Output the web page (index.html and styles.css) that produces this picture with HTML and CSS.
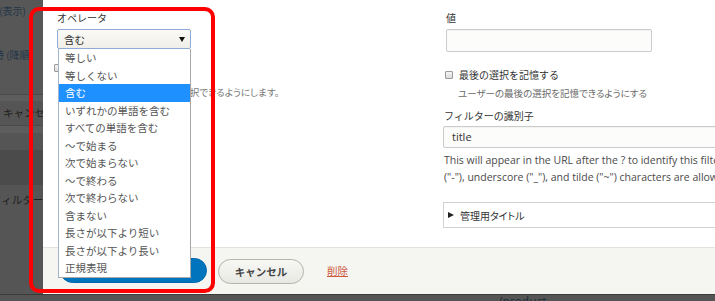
FILE: index.html
```html
<!DOCTYPE html>
<html lang="ja">
<head>
<meta charset="utf-8">
<title>フィルターの設定</title>
<link rel="stylesheet" href="styles.css">
</head>
<body>
<div class="screen">
  <div class="main">
    <aside class="backdrop">
      <div class="bd bd-1"><span class="bd-link">公開 (表示)</span></div>
      <div class="bd bd-2"><span class="bd-link">更新日時 (降順)</span></div>
      <div class="bd bd-line"></div>
      <div class="bd bd-3"></div>
      <div class="bd bd-4"><span class="bd-text">キャンセル</span></div>
      <div class="bd bd-line"></div>
      <div class="bd bd-5"></div>
      <div class="bd bd-6"></div>
      <div class="bd bd-7"></div>
      <div class="bd bd-8"><span class="bd-text bd-shift">フィルターで絞り込み</span></div>
    </aside>

    <section class="modal">
      <div class="modal-body">
        <div class="col col-left">
          <div class="label">オペレータ</div>
          <div class="select-wrap">
            <div class="select"><span>含む</span><span class="arrow"></span></div>
            <ul class="options">
              <li>等しい</li>
              <li>等しくない</li>
              <li class="selected">含む</li>
              <li>いずれかの単語を含む</li>
              <li>すべての単語を含む</li>
              <li>～で始まる</li>
              <li>次で始まらない</li>
              <li>～で終わる</li>
              <li>次で終わらない</li>
              <li>含まない</li>
              <li>長さが以下より短い</li>
              <li>長さが以下より長い</li>
              <li>正規表現</li>
            </ul>
          </div>
          <div class="check-row left-check"><span class="checkbox"></span><span class="check-label">オペレータを公開する</span></div>
          <div class="desc left-desc">ユーザーがこのフィルターの選択できるようにします。</div>
        </div>

        <div class="col col-right">
          <div class="label label-value">値</div>
          <div class="input input-value"></div>
          <div class="check-row right-check"><span class="checkbox"></span><span class="check-label">最後の選択を記憶する</span></div>
          <div class="desc right-desc">ユーザーの最後の選択を記憶できるようにする</div>
          <div class="label label-id">フィルターの識別子</div>
          <div class="input input-id">title</div>
          <div class="desc-en">This will appear in the URL after the ? to identify this filter. Cannot be blank. Only letters, digits and the dot ("."), hyphen<br>("-"), underscore ("_"), and tilde ("~") characters are allowed.</div>
          <div class="details"><span class="tri"></span><span>管理用タイトル</span></div>
        </div>
      </div>

      <div class="modal-footer">
        <button class="btn btn-primary">適用</button>
        <button class="btn btn-cancel">キャンセル</button>
        <a class="link-delete" href="#">削除</a>
      </div>
    </section>
  </div>
  <div class="bottom-band"><span>/product</span></div>
  <div class="annotation"></div>
</div>
</body>
</html>
```

FILE: styles.css
```css
* { box-sizing: border-box; }
html, body { margin: 0; padding: 0; }
body {
  width: 715px;
  height: 301px;
  overflow: hidden;
  background: #4d4d4d;
  font-family: "Noto Sans CJK JP", "Open Sans", sans-serif;
  color: #333;
}
.screen {
  position: relative;
  width: 715px;
  height: 301px;
  display: flex;
  flex-direction: column;
}
.main {
  display: flex;
  height: 294px;
  flex: none;
}

/* dimmed page behind the dialog */
.backdrop {
  width: 43px;
  flex: none;
  display: flex;
  flex-direction: column;
  background: #555;
  overflow: hidden;
  font-size: 10px;
  line-height: 14px;
}
.bd { display: flex; flex: none; white-space: nowrap; }
.bd-1 { height: 33px; background: #575757; justify-content: flex-end; padding: 4px 17px 0 0; }
.bd-2 { height: 61px; background: #575757; justify-content: flex-end; padding: 15px 10px 0 0; }
.bd-line { height: 1px; background: #4a4a4a; }
.bd-3 { height: 6px; background: #5d5d5d; }
.bd-4 { height: 24px; background: #555; align-items: center; padding-left: 3px; }
.bd-5 { height: 7px; background: #5d5d5d; }
.bd-6 { height: 17px; background: #555; }
.bd-7 { height: 35px; background: #4b4b4b; }
.bd-8 { flex: 1; background: #555; padding-top: 8px; }
.bd-link { color: #24364a; }
.bd-text { color: #1f1f1f; font-size: 10.5px; }
.bd-shift { margin-left: -9px; }

/* dialog */
.modal {
  flex: 1;
  display: flex;
  flex-direction: column;
  background: #fff;
  overflow: hidden;
}
.modal-body {
  height: 247px;
  flex: none;
  display: grid;
  grid-template-columns: 388px 1fr;
  padding-left: 14px;
}
.col { display: flex; flex-direction: column; min-width: 0; }

.label {
  font-size: 10px;
  line-height: 14px;
  height: 14px;
  color: #333;
  white-space: nowrap;
}
.col-left .label, .label-value { margin-top: 11px; }
.label-value { margin-left: 1px; }

/* select + open list */
.select-wrap {
  position: relative;
  z-index: 5;
  margin-top: 4px;
  width: 134px;
  height: 20px;
}
.select {
  height: 20px;
  border: 1px solid #8eaad6;
  border-radius: 2px;
  background: linear-gradient(#fbfaf6, #efeee7);
  display: flex;
  align-items: center;
  justify-content: space-between;
  padding: 0 5px 0 6px;
  font-size: 10.5px;
  color: #333;
}
.arrow {
  width: 0;
  height: 0;
  border-left: 3.5px solid transparent;
  border-right: 3.5px solid transparent;
  border-top: 5px solid #111;
}
.options {
  position: absolute;
  left: 1px;
  top: 20px;
  width: 133px;
  margin: 0;
  padding: 0;
  list-style: none;
  background: #fff;
  border: 1px solid #a8a8a8;
  border-left-color: #a3b3cb;
  border-top: none;
}
.options li {
  height: 17.5px;
  line-height: 17.5px;
  padding-left: 6px;
  font-size: 10.5px;
  color: #555;
  white-space: nowrap;
}
.options li.selected { background: #1e90ff; color: #fff; }

.check-row {
  display: flex;
  align-items: center;
  gap: 6px;
  font-size: 10px;
  line-height: 14px;
  white-space: nowrap;
}
.checkbox {
  width: 8px;
  height: 8px;
  flex: none;
  border: 1px solid #9a9a9a;
  border-radius: 1px;
  background: linear-gradient(#f4f4f4, #dcdcdc);
}
.left-check { margin-top: 12px; margin-left: -3px; }
.right-check { margin-top: 16px; }

.desc {
  font-size: 9.5px;
  line-height: 14px;
  color: #777;
  white-space: nowrap;
  font-feature-settings: "palt";
}
.left-desc { margin-top: 10px; padding-left: 9px; }
.right-desc { margin-top: 4px; padding-left: 13px; color: #6a6a6a; }

.input {
  border: 1px solid #cbcbcb;
  border-radius: 2px;
  background: #fcfcfa;
  box-shadow: inset 0 1px 1px rgba(0,0,0,0.04);
}
.input-value { margin-top: 4px; margin-left: 1px; width: 206px; height: 23px; }
.label-id { margin-top: 9px; margin-left: -1px; }
.input-id {
  margin-top: 3px;
  margin-left: -2px;
  width: 300px;
  height: 22px;
  padding-left: 8px;
  font-family: "Open Sans", sans-serif;
  font-size: 11px;
  line-height: 20px;
  color: #333;
}
.desc-en {
  margin-top: 3.5px;
  margin-left: -1px;
  font-family: "Open Sans", sans-serif;
  font-size: 10.5px;
  line-height: 17px;
  color: #4a4a4a;
  white-space: nowrap;
}
.details {
  margin-top: 16.5px;
  margin-left: -2px;
  width: 300px;
  height: 26px;
  border: 1px solid #d2d2d2;
  display: flex;
  align-items: center;
  gap: 6px;
  padding-left: 4px;
  font-size: 10px;
  color: #333;
  font-feature-settings: "palt";
}
.tri {
  width: 0;
  height: 0;
  border-top: 3.5px solid transparent;
  border-bottom: 3.5px solid transparent;
  border-left: 6px solid #222;
}

/* footer */
.modal-footer {
  flex: 1;
  background: #f5f5f2;
  border-top: 1px solid #e2e2dc;
  display: flex;
  align-items: flex-start;
  padding: 10px 0 0 17px;
}
.btn {
  height: 25px;
  border-radius: 13px;
  font-family: "Noto Sans CJK JP", sans-serif;
  font-size: 10.5px;
  padding: 0;
  margin: 0;
}
.btn-primary {
  width: 147px;
  background: #0074bd;
  border: 1px solid #0068aa;
  color: #fff;
}
.btn-cancel {
  width: 86px;
  margin-left: 11px;
  margin-top: 1px;
  background: linear-gradient(#f7f7f4, #e8e8e3);
  border: 1px solid #b4b4ac;
  color: #444;
  font-weight: bold;
}
.link-delete {
  margin-left: 23px;
  margin-top: 6px;
  font-size: 10.5px;
  line-height: 14px;
  color: #cf5a3f;
  text-decoration: underline;
}

.bottom-band {
  height: 7px;
  flex: none;
  background: #555;
  border-top: 1px solid #3a3a3a;
  overflow: hidden;
  padding-left: 498px;
}
.bottom-band span {
  display: block;
  font-family: "Open Sans", sans-serif;
  font-size: 12px;
  line-height: 14px;
  color: #1d2b3b;
}

/* red annotation frame drawn over the screenshot */
.annotation {
  position: absolute;
  left: 29px;
  top: 7px;
  width: 186px;
  height: 286px;
  border: 4.5px solid #ff0000;
  border-radius: 10px;
  pointer-events: none;
  z-index: 20;
}
```
